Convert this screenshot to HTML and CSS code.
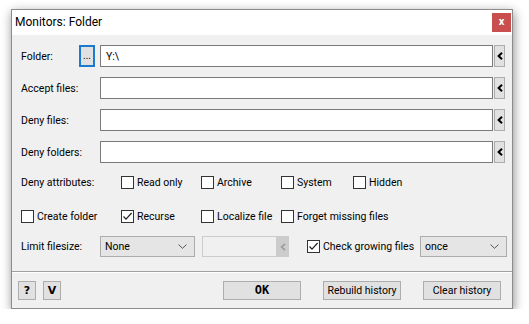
FILE: index.html
```html
<!DOCTYPE html>
<html>
<head>
<meta charset="utf-8">
<link rel="stylesheet" href="styles.css">
</head>
<body>
<div class="window">
  <div class="titlebar">
    <span class="title">Monitors: Folder</span>
    <div class="close">x</div>
  </div>
  <div class="content">
    <div class="row field r1">
      <span class="lbl lbl-short">Folder:</span>
      <div class="browse">...</div>
      <div class="input">Y:\</div>
      <div class="arrow"><svg width="6" height="8" viewBox="0 0 6 8"><path d="M5 0.8 L1.6 4 L5 7.2" fill="none" stroke="#000" stroke-width="2"/></svg></div>
    </div>
    <div class="row field r2">
      <span class="lbl">Accept files:</span>
      <div class="input"></div>
      <div class="arrow"><svg width="6" height="8" viewBox="0 0 6 8"><path d="M5 0.8 L1.6 4 L5 7.2" fill="none" stroke="#000" stroke-width="2"/></svg></div>
    </div>
    <div class="row field r3">
      <span class="lbl">Deny files:</span>
      <div class="input"></div>
      <div class="arrow"><svg width="6" height="8" viewBox="0 0 6 8"><path d="M5 0.8 L1.6 4 L5 7.2" fill="none" stroke="#000" stroke-width="2"/></svg></div>
    </div>
    <div class="row field r4">
      <span class="lbl">Deny folders:</span>
      <div class="input"></div>
      <div class="arrow"><svg width="6" height="8" viewBox="0 0 6 8"><path d="M5 0.8 L1.6 4 L5 7.2" fill="none" stroke="#000" stroke-width="2"/></svg></div>
    </div>
    <div class="row attrs">
      <span class="lbl lbl-wide">Deny attributes:</span>
      <label class="chk w80"><span class="box"></span>Read only</label>
      <label class="chk w80"><span class="box"></span>Archive</label>
      <label class="chk w72"><span class="box"></span>System</label>
      <label class="chk"><span class="box"></span>Hidden</label>
    </div>
    <div class="row opts">
      <label class="chk w100"><span class="box"></span>Create folder</label>
      <label class="chk w80"><span class="box checked"><svg width="11" height="11" viewBox="0 0 11 11"><path d="M1.5 5.5 L4 8.2 L9.6 2" fill="none" stroke="#222" stroke-width="1.2"/></svg></span>Recurse</label>
      <label class="chk w80"><span class="box"></span>Localize file</label>
      <label class="chk"><span class="box"></span>Forget missing files</label>
    </div>
    <div class="row limit">
      <span class="lbl">Limit filesize:</span>
      <div class="select sel-none"><span>None</span><svg width="9" height="5" viewBox="0 0 9 5"><path d="M0.5 0.5 L4.5 4.3 L8.5 0.5" fill="none" stroke="#555" stroke-width="1"/></svg></div>
      <div class="input disabled"></div>
      <div class="arrow arrow-disabled"><svg width="6" height="8" viewBox="0 0 6 8"><path d="M5 0.8 L1.6 4 L5 7.2" fill="none" stroke="#9a9a9a" stroke-width="1.6"/></svg></div>
      <label class="chk growing"><span class="box checked"><svg width="11" height="11" viewBox="0 0 11 11"><path d="M1.5 5.5 L4 8.2 L9.6 2" fill="none" stroke="#222" stroke-width="1.2"/></svg></span>Check growing files</label>
      <div class="select sel-once"><span>once</span><svg width="9" height="5" viewBox="0 0 9 5"><path d="M0.5 0.5 L4.5 4.3 L8.5 0.5" fill="none" stroke="#555" stroke-width="1"/></svg></div>
    </div>
  </div>
  <div class="footer">
    <div class="btn sq">?</div>
    <div class="btn sq">V</div>
    <div class="spacer"></div>
    <div class="btn wide ok">OK</div>
    <div class="btn wide">Rebuild history</div>
    <div class="btn wide">Clear history</div>
  </div>
</div>
</body>
</html>
```

FILE: styles.css
```css
html, body {
  margin: 0;
  padding: 0;
  background: #ffffff;
}
body {
  font-family: "Roboto", "Liberation Sans", sans-serif;
  font-size: 10.5px;
  line-height: 13px;
  color: #000;
  white-space: nowrap;
}
.window {
  margin: 9px 0 0 11px;
  width: 500px;
  border: 1px solid #8c8c8c;
  background: #f0f0f0;
  box-shadow: 1px 3px 10px rgba(0,0,0,0.45);
}
.titlebar {
  height: 25px;
  background: #fff;
  display: flex;
  align-items: center;
  padding-left: 3px;
  padding-right: 1px;
}
.title {
  flex: 1;
  font-size: 12px;
}
.close {
  width: 19px;
  height: 19px;
  background: #c94f4f;
  color: #fff;
  font-size: 11px;
  font-weight: bold;
  display: flex;
  align-items: center;
  justify-content: center;
  line-height: 1;
  padding-bottom: 2px;
  box-sizing: border-box;
}
.content {
  padding: 10px 7px 14px 9px;
  display: flex;
  flex-direction: column;
}
.row {
  display: flex;
  align-items: center;
}
.field { height: 22px; }
.r2, .r3, .r4 { margin-top: 10px; }
.lbl {
  width: 79px;
  flex: none;
}
.lbl-short { width: 58px; }
.lbl-wide { width: 100px; }
.browse {
  width: 16px;
  height: 22px;
  box-sizing: border-box;
  border: 2px solid #1c7bd0;
  background: #e1e1e1;
  margin-right: 5px;
  font-size: 10px;
  display: flex;
  align-items: flex-end;
  justify-content: center;
  padding-bottom: 4px;
  line-height: 1;
}
.input {
  flex: 1;
  height: 22px;
  box-sizing: border-box;
  border: 1px solid #7a7a7a;
  background: #fff;
  padding-left: 5px;
  display: flex;
  align-items: center;
}
.arrow {
  width: 11px;
  height: 22px;
  box-sizing: border-box;
  margin-left: 1px;
  background: #e1e1e1;
  border: 1px solid #adadad;
  display: flex;
  align-items: center;
  justify-content: center;
  flex: none;
}
.attrs {
  height: 22px;
  margin-top: 8px;
}
.opts {
  height: 22px;
  margin-top: 12px;
}
.limit {
  height: 21px;
  margin-top: 9px;
}
.chk {
  display: flex;
  align-items: center;
  flex: none;
}
.w72 { width: 72px; }
.w80 { width: 80px; }
.w100 { width: 100px; }
.box {
  width: 13px;
  height: 13px;
  box-sizing: border-box;
  border: 1px solid #333;
  background: #fff;
  margin-right: 3px;
  display: flex;
  align-items: center;
  justify-content: center;
}
.select {
  height: 21px;
  box-sizing: border-box;
  border: 1px solid #acacac;
  background: #e5e5e5;
  display: flex;
  align-items: center;
  justify-content: space-between;
  padding: 0 7px 0 4px;
  flex: none;
}
.sel-none { width: 95px; margin-right: 7px; }
.input.disabled {
  flex: none;
  width: 75px;
  height: 21px;
  border-color: #cccccc;
  background: #f0f0f0;
}
.arrow-disabled {
  height: 21px;
  width: 12px;
  margin-left: 0;
  background: #cccccc;
  border-color: #cccccc;
}
.growing {
  margin-left: 18px;
  width: 113px;
}
.sel-once { width: 87px; margin-right: -3px; }
.footer {
  border-top: 1px solid #a0a0a0;
  box-shadow: inset 0 1px 0 #ffffff;
  padding: 9px 11px 8px 6px;
  display: flex;
  align-items: center;
}
.btn {
  height: 19px;
  box-sizing: border-box;
  border: 1px solid #adadad;
  background: #e1e1e1;
  display: flex;
  align-items: center;
  justify-content: center;
  flex: none;
}
.sq {
  width: 18px;
  font-weight: bold;
  font-family: "DejaVu Sans", sans-serif;
  font-size: 11px;
  margin-right: 7px;
}
.spacer { flex: 1; }
.wide {
  width: 78px;
  margin-left: 22px;
}
.ok {
  font-weight: bold;
  font-family: "DejaVu Sans Mono", monospace;
  font-size: 12px;
}
```
